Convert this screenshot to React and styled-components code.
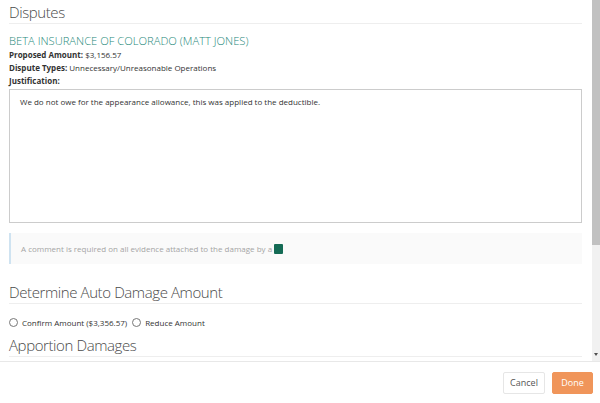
import React from "react";
import styled, { createGlobalStyle } from "styled-components";

const Global = createGlobalStyle`
  html, body { margin: 0; padding: 0; background: #fff; }
  body { font-family: "Open Sans", "Liberation Sans", sans-serif; color: #333; }
  * { box-sizing: border-box; }
`;

const Page = styled.div`
  width: 600px;
  height: 403px;
  display: flex;
  flex-direction: column;
  background: #fff;
`;

const Body = styled.div`
  flex: 1;
  min-height: 0;
  display: flex;
`;

const Scroll = styled.div`
  flex: 1;
  min-width: 0;
  overflow: hidden;
`;

const ScrollTrack = styled.div`
  width: 8px;
  background: #f1f1f1;
  display: flex;
  flex-direction: column;
  align-items: center;
`;

const ScrollThumb = styled.div`
  width: 8px;
  height: 245px;
  background: #c1c1c1;
`;

const ScrollArrow = styled.div`
  margin-top: auto;
  margin-bottom: 5px;
  width: 0;
  height: 0;
  border-left: 2.5px solid transparent;
  border-right: 2.5px solid transparent;
  border-top: 3px solid #505050;
`;

const Content = styled.div`
  padding: 2px 10px 0 9px;
`;

const SectionTitle = styled.h2`
  margin: 0;
  font-size: 15px;
  font-weight: 300;
  color: #4a4a4a;
  line-height: 20px;
  padding-bottom: 1px;
  border-bottom: 1px solid #eee;
  letter-spacing: -0.4px;
`;

const Company = styled.div`
  margin-top: 10px;
  font-size: 11.2px;
  font-weight: 300;
  color: #27897a;
  line-height: 14px;
  text-transform: uppercase;
`;

const InfoLine = styled.div`
  font-size: 8px;
  line-height: 13px;
  color: #333;
  b { font-weight: 700; }
`;

const Justification = styled.div`
  margin-top: 2px;
  height: 134px;
  border: 1px solid #ccc;
  padding: 6px 10px;
  font-size: 8px;
  line-height: 12px;
  color: #333;
`;

const Notice = styled.div`
  margin-top: 10px;
  height: 31px;
  background: #fafafa;
  border-left: 2px solid #cfe3f1;
  padding: 0 10px;
  display: flex;
  align-items: center;
  font-size: 8px;
  color: #a5a5a5;
`;

const Swatch = styled.span`
  display: inline-block;
  width: 9px;
  height: 10px;
  margin-left: 2px;
  background: #146b55;
  border-radius: 1px;
`;

const SpacedTitle = styled(SectionTitle)`
  margin-top: ${(p) => p.$top}px;
`;

const RadioRow = styled.div`
  display: flex;
  align-items: center;
  gap: 5px;
  margin-top: 12px;
  font-size: 8px;
  color: #333;
  line-height: 13px;
`;

const RadioLabel = styled.label`
  display: flex;
  align-items: center;
  gap: 4px;
`;

const RadioCircle = styled.span`
  width: 9px;
  height: 9px;
  border: 1px solid #777;
  border-radius: 50%;
  background: #fff;
`;

const Footer = styled.div`
  height: 42px;
  border-top: 1px solid #e8e8e8;
  display: flex;
  align-items: center;
  justify-content: flex-end;
  gap: 7px;
  padding: 0 7px 0 0;
`;

const Button = styled.button`
  height: 22px;
  width: ${(p) => (p.$primary ? 41 : 42)}px;
  padding: 0;
  font-family: "Open Sans", "Liberation Sans", sans-serif;
  font-size: 9px;
  border-radius: 2px;
  cursor: pointer;
  border: 1px solid ${(p) => (p.$primary ? "#f0955a" : "#e6e6e6")};
  background: ${(p) => (p.$primary ? "#f0955a" : "#fff")};
  color: ${(p) => (p.$primary ? "#fff" : "#555")};
`;

export default function App() {
  return (
    <Page>
      <Global />
      <Body>
        <Scroll>
          <Content>
            <SectionTitle>Disputes</SectionTitle>
            <Company>Beta Insurance of Colorado (Matt Jones)</Company>
            <InfoLine><b>Proposed Amount:</b> $3,156.57</InfoLine>
            <InfoLine><b>Dispute Types:</b> Unnecessary/Unreasonable Operations</InfoLine>
            <InfoLine><b>Justification:</b></InfoLine>
            <Justification>
              We do not owe for the appearance allowance, this was applied to the deductible.
            </Justification>
            <Notice>
              A comment is required on all evidence attached to the damage by a <Swatch />
            </Notice>
            <SpacedTitle $top={18}>Determine Auto Damage Amount</SpacedTitle>
            <RadioRow>
              <RadioLabel><RadioCircle />Confirm Amount ($3,356.57)</RadioLabel>
              <RadioLabel><RadioCircle />Reduce Amount</RadioLabel>
            </RadioRow>
            <SpacedTitle $top={6}>Apportion Damages</SpacedTitle>
          </Content>
        </Scroll>
        <ScrollTrack>
          <ScrollThumb />
          <ScrollArrow />
        </ScrollTrack>
      </Body>
      <Footer>
        <Button>Cancel</Button>
        <Button $primary>Done</Button>
      </Footer>
    </Page>
  );
}
